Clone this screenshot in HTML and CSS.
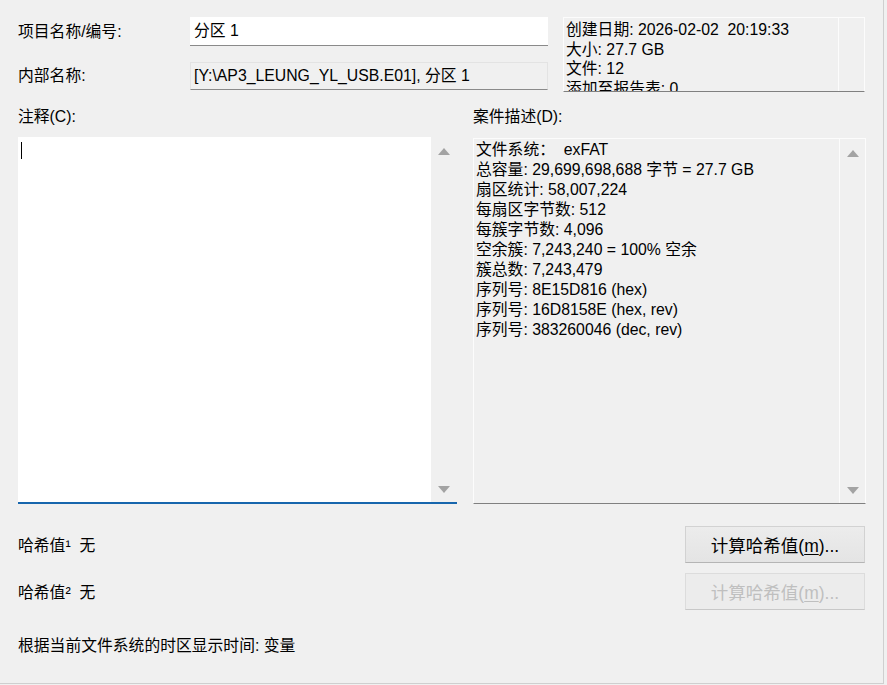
FILE: index.html
```html
<!DOCTYPE html>
<html lang="zh-CN">
<head>
    <meta charset="UTF-8">
    <title>分区 1 属性</title>
    <link rel="stylesheet" href="styles.css">
</head>
<body>
    <div class="dialog">
        <div class="top-grid">
            <label class="field-label">项目名称/编号:</label>
            <div class="edit-box">分区 1</div>
            <div class="info-box">
                <div class="info-text">
                    <div>创建日期: 2026-02-02&nbsp;&nbsp;20:19:33</div>
                    <div>大小: 27.7 GB</div>
                    <div>文件: 12</div>
                    <div>添加至报告表: 0</div>
                </div>
                <div class="scrollbar plain"></div>
            </div>
            <label class="field-label">内部名称:</label>
            <div class="edit-box readonly">[Y:\AP3_LEUNG_YL_USB.E01], 分区 1</div>
        </div>

        <div class="mid-grid">
            <div class="field-label">注释(C):</div>
            <div class="field-label">案件描述(D):</div>

            <div class="memo focused">
                <div class="memo-text"><span class="caret"></span></div>
                <div class="scrollbar">
                    <span class="arrow up"></span>
                    <span class="arrow down"></span>
                </div>
            </div>

            <div class="memo readonly">
                <div class="memo-text desc">
                    <div>文件系统：&nbsp;&nbsp;exFAT</div>
                    <div>总容量: 29,699,698,688 字节 = 27.7 GB</div>
                    <div>扇区统计: 58,007,224</div>
                    <div>每扇区字节数: 512</div>
                    <div>每簇字节数: 4,096</div>
                    <div>空余簇: 7,243,240 = 100% 空余</div>
                    <div>簇总数: 7,243,479</div>
                    <div>序列号: 8E15D816 (hex)</div>
                    <div>序列号: 16D8158E (hex, rev)</div>
                    <div>序列号: 383260046 (dec, rev)</div>
                </div>
                <div class="scrollbar">
                    <span class="arrow up"></span>
                    <span class="arrow down"></span>
                </div>
            </div>
        </div>

        <div class="hash-row first">
            <span>哈希值¹&nbsp;&nbsp;无</span>
            <button class="btn">计算哈希值(<u>m</u>)...</button>
        </div>
        <div class="hash-row">
            <span>哈希值²&nbsp;&nbsp;无</span>
            <button class="btn" disabled>计算哈希值(<u>m</u>)...</button>
        </div>

        <div class="footnote">根据当前文件系统的时区显示时间: 变量</div>
    </div>
</body>
</html>
```

FILE: styles.css
```css
body {
    margin: 0;
    background-color: #f0f0f0;
    font-family: 'Liberation Sans', 'Noto Sans CJK SC', sans-serif;
    font-size: 15.8px;
    color: #000;
}

.dialog {
    width: 865px;
    height: 666px;
    padding: 17px 0 0 18px;
    border-right: 1px solid #cfcfcf;
    border-bottom: 1px solid #cfcfcf;
    box-sizing: content-box;
    overflow: hidden;
}

.field-label {
    line-height: 20px;
}

/* --- bloque superior --- */
.top-grid {
    display: grid;
    grid-template-columns: 157px 358px 302px;
    grid-template-rows: 29px 29px;
    column-gap: 15px;
    row-gap: 15px;
    align-items: center;
}

.edit-box {
    height: 29px;
    box-sizing: border-box;
    background-color: #fff;
    border-bottom: 1px solid #8a8a8a;
    padding: 3px 4px 0;
    line-height: 22px;
    white-space: nowrap;
}

.edit-box.readonly {
    height: 28px;
    background-color: #f0f0f0;
    border: 1px solid #e3e3e3;
    border-bottom-color: #8a8a8a;
    padding: 2px 3px 0;
}

.info-box {
    grid-column: 3;
    grid-row: 1 / span 2;
    align-self: start;
    height: 75px;
    box-sizing: border-box;
    display: flex;
    border: 1px solid #fcfcfc;
    border-bottom-color: #808080;
    overflow: hidden;
}

.info-text {
    flex: 1;
    padding: 2px 0 0 2px;
    line-height: 19.5px;
    overflow: hidden;
    white-space: nowrap;
}

/* --- notas y descripción --- */
.mid-grid {
    display: grid;
    grid-template-columns: 439px 393px;
    column-gap: 16px;
    margin-top: 17px;
}

.mid-grid .field-label {
    margin-bottom: 10px;
}

.memo {
    height: 367px;
    box-sizing: border-box;
    display: flex;
}

.memo.focused {
    background-color: #fff;
    border-bottom: 2px solid #1766ad;
}

.memo.readonly {
    height: 366px;
    margin-top: 1px;
    background-color: #f0f0f0;
    border: 1px solid #fcfcfc;
    border-bottom-color: #808080;
}

.memo-text {
    flex: 1;
    padding: 3px 0 0 3px;
    white-space: nowrap;
}

.memo-text.desc {
    padding: 1px 0 0 2px;
    line-height: 20px;
}

.caret {
    display: block;
    width: 1px;
    height: 17px;
    margin-top: 2px;
    background-color: #000;
}

.scrollbar {
    width: 26px;
    background-color: #f0f0f0;
    display: flex;
    flex-direction: column;
    justify-content: space-between;
    align-items: center;
    padding: 11px 0 9px;
    box-sizing: border-box;
}

.memo.readonly .scrollbar,
.scrollbar.plain {
    border-left: 1px solid #fcfcfc;
}

.arrow {
    width: 0;
    height: 0;
    border-left: 6px solid transparent;
    border-right: 6px solid transparent;
}

.arrow.up {
    border-bottom: 7px solid #a3a3a3;
}

.arrow.down {
    border-top: 7px solid #a3a3a3;
}

/* --- hash --- */
.hash-row {
    display: flex;
    justify-content: space-between;
    align-items: center;
    width: 847px;
    height: 37px;
    margin-top: 10px;
}

.hash-row.first {
    margin-top: 22px;
}

.btn {
    width: 180px;
    height: 37px;
    font-family: inherit;
    font-size: 17.5px;
    color: #000;
    background: linear-gradient(#ececec, #e4e4e4);
    border: 1px solid #d2d2d2;
    border-bottom-color: #b5b5b5;
    border-radius: 0;
    padding: 0;
}

.btn:disabled {
    color: #bfbfbf;
    background: #ececec;
    border-color: #dcdcdc;
    border-bottom-color: #c8c8c8;
}

.btn u {
    text-underline-offset: 2px;
}

.footnote {
    margin-top: 26px;
    line-height: 20px;
}
```
